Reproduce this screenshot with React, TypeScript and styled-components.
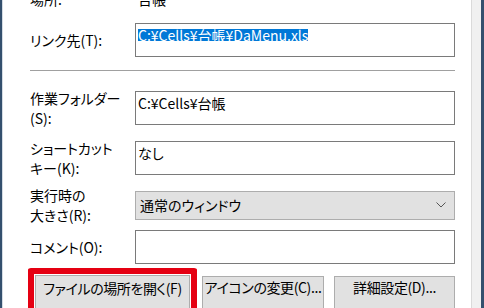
import React from "react";
import styled, { createGlobalStyle } from "styled-components";

const GlobalStyle = createGlobalStyle`
  html, body {
    margin: 0;
    padding: 0;
    background: #f0f0f0;
  }
  body {
    font-family: "Noto Sans CJK JP", "Noto Sans", sans-serif;
    font-feature-settings: "palt";
    font-size: 14px;
    color: #000;
  }
`;

const Frame = styled.div`
  width: 484px;
  height: 308px;
  box-sizing: border-box;
  overflow: hidden;
  display: flex;
  background: #f0f0f0;
  border-left: 2px solid #34506e;
  border-right: 3px solid #34506e;
  padding-right: 10px;
`;

const Panel = styled.div`
  flex: 1;
  background: #fff;
  border-left: 1px solid #d4dce4;
  border-right: 1px solid #dadada;
  padding: 0 16px 0 27px;
  display: flex;
  flex-direction: column;
`;

const Row = styled.div<{ $top: number; $height: number }>`
  display: grid;
  grid-template-columns: 105px 1fr;
  align-items: center;
  margin-top: ${(p) => p.$top}px;
  height: ${(p) => p.$height}px;
  flex-shrink: 0;
`;

const Label = styled.div`
  line-height: 20px;
  white-space: nowrap;
`;

const Value = styled.div`
  padding-left: 3px;
  line-height: 20px;
`;

const Field = styled.div`
  height: 34px;
  box-sizing: border-box;
  border: 1px solid #7a7a7a;
  padding: 1px 2px;
  line-height: 20px;
  white-space: nowrap;
`;

const Selected = styled.span`
  display: inline-block;
  height: 12px;
  line-height: 12px;
  background: #0078d7;
  color: #fff;
  vertical-align: 1px;
  margin-top: 4px;
`;

const Separator = styled.div`
  margin-top: 13px;
  height: 1px;
  background: #a0a0a0;
  flex-shrink: 0;
`;

const Select = styled.div`
  height: 29px;
  box-sizing: border-box;
  border: 1px solid #adadad;
  background: #e1e1e1;
  display: flex;
  align-items: center;
  justify-content: space-between;
  padding: 0 8px 0 4px;
`;

const Buttons = styled.div`
  display: flex;
  align-items: flex-start;
  margin: 4px 0 0 -2px;
  flex-shrink: 0;
`;

const Highlight = styled.div`
  border: 6px solid #e50012;
  border-radius: 3px;
  padding: 1px;
  border-bottom: none;
`;

const Button = styled.div<{ $width: number; $gap?: number }>`
  width: ${(p) => p.$width}px;
  margin-left: ${(p) => p.$gap || 0}px;
  margin-top: ${(p) => (p.$gap ? 8 : 0)}px;
  height: 36px;
  box-sizing: border-box;
  border: 1px solid #adadad;
  background: #e1e1e1;
  text-align: center;
  padding-top: ${(p) => (p.$gap ? 0 : 2)}px;
  line-height: 20px;
  letter-spacing: -0.4px;
  white-space: nowrap;
`;

const Chevron = () => (
  <svg width="10" height="6" viewBox="0 0 10 6">
    <path d="M0.5 0.5 L5 5 L9.5 0.5" fill="none" stroke="#555" strokeWidth="1" />
  </svg>
);

export default function App() {
  return (
    <>
      <GlobalStyle />
      <Frame>
        <Panel>
          <Row $top={-12} $height={22}>
            <Label>場所:</Label>
            <Value>台帳</Value>
          </Row>
          <Row $top={13} $height={34}>
            <Label>リンク先(T):</Label>
            <Field>
              <Selected>C:¥Cells¥台帳¥DaMenu.xls</Selected>
            </Field>
          </Row>
          <Separator />
          <Row $top={17} $height={34}>
            <Label>
              作業フォルダー
              <br />
              (S):
            </Label>
            <Field>C:¥Cells¥台帳</Field>
          </Row>
          <Row $top={16} $height={34}>
            <Label>
              ショートカット
              <br />
              キー(K):
            </Label>
            <Field>なし</Field>
          </Row>
          <Row $top={13} $height={29}>
            <Label>
              実行時の
              <br />
              大きさ(R):
            </Label>
            <Select>
              <span>通常のウィンドウ</span>
              <Chevron />
            </Select>
          </Row>
          <Row $top={16} $height={34}>
            <Label>コメント(O):</Label>
            <Field />
          </Row>
          <Buttons>
            <Highlight>
              <Button $width={155}>ファイルの場所を開く(F)</Button>
            </Highlight>
            <Button $width={122} $gap={5}>
              アイコンの変更(C)...
            </Button>
            <Button $width={121} $gap={10}>
              詳細設定(D)...
            </Button>
          </Buttons>
        </Panel>
      </Frame>
    </>
  );
}
